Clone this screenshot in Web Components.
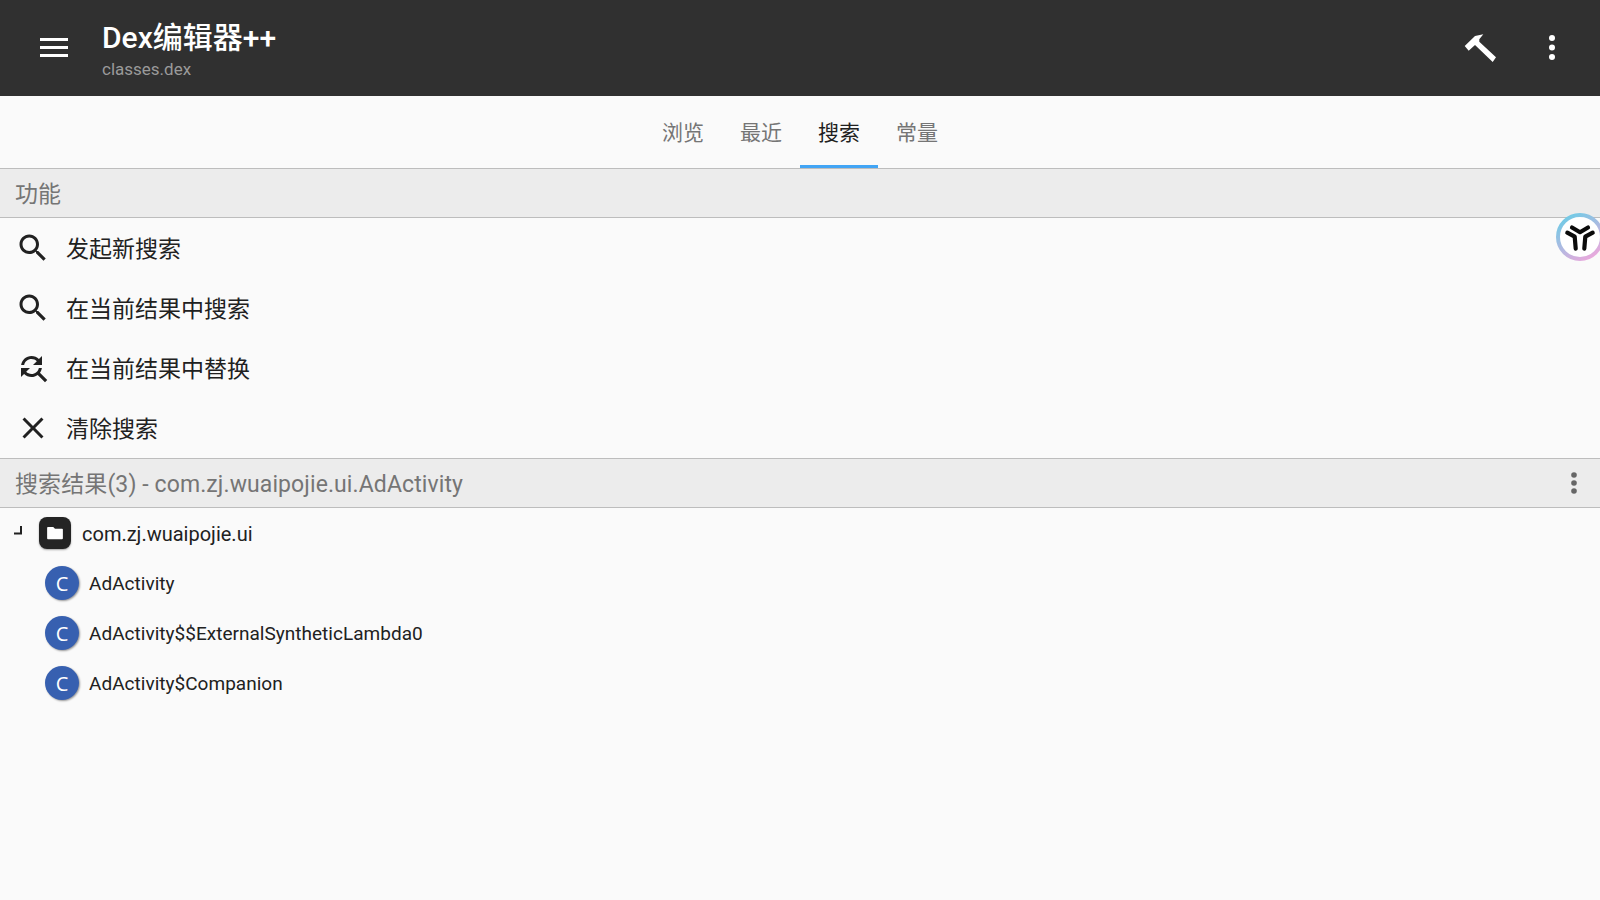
<!DOCTYPE html>
<html>
<head>
<meta charset="utf-8">
<title>Dex编辑器++</title>
<style>
  html, body { margin: 0; padding: 0; height: 100%; overflow: hidden; background: #fafafa; }
  body { font-family: Roboto, "Noto Sans CJK SC", sans-serif; }
</style>
</head>
<body>
<dex-app></dex-app>

<script>
const PATHS = {
  search: 'M15.5 14h-.79l-.28-.27C15.41 12.59 16 11.11 16 9.5 16 5.91 13.09 3 9.5 3S3 5.91 3 9.5 5.91 16 9.5 16c1.61 0 3.09-.59 4.23-1.57l.27.28v.79l5 4.99L20.49 19l-4.99-5zm-6 0C7.01 14 5 11.99 5 9.5S7.01 5 9.5 5 14 7.01 14 9.5 11.99 14 9.5 14z',
  replace: 'M11 6c1.38 0 2.63.56 3.54 1.46L12 10h6V4l-2.05 2.05C14.68 4.78 12.93 4 11 4c-3.53 0-6.43 2.61-6.92 6H6.1c.46-2.28 2.48-4 4.9-4zm5.64 9.14c.66-.9 1.12-1.97 1.28-3.14H15.9c-.46 2.28-2.48 4-4.9 4-1.38 0-2.63-.56-3.54-1.46L10 12H4v6l2.05-2.05C7.32 17.22 9.07 18 11 18c1.55 0 2.98-.51 4.14-1.36L20 21.49 21.49 20l-4.85-4.86z',
  close: 'M19 6.41L17.59 5 12 10.59 6.41 5 5 6.41 10.59 12 5 17.59 6.41 19 12 13.41 17.59 19 19 17.59 13.41 12z'
};

class AppBar extends HTMLElement {
  constructor() {
    super();
    const shadow = this.attachShadow({ mode: 'open' });
    shadow.innerHTML = `
      <style>
        :host { display: flex; align-items: center; height: 96px; background: #303030; color: #fff; flex: none; }
        .nav { width: 102px; height: 96px; flex: none; }
        .titles { flex: 1; display: flex; flex-direction: column; }
        .title { font-size: 30px; line-height: 38px; font-weight: 500; margin-top: 2px; }
        .sub { font-size: 17px; line-height: 20px; color: #9a9a9a; margin-top: 2px; }
        .act { display: block; flex: none; margin-top: -2px; }
      </style>
      <svg class="nav" viewBox="0 0 102 96">
        <rect x="40" y="38" width="28" height="3" fill="#fff"/>
        <rect x="40" y="46" width="28" height="3" fill="#fff"/>
        <rect x="40" y="54" width="28" height="3" fill="#fff"/>
      </svg>
      <div class="titles">
        <div class="title">Dex编辑器++</div>
        <div class="sub">classes.dex</div>
      </div>
      <svg class="act" width="40" height="40" viewBox="0 0 40 40">
        <polygon fill="#fff" points="4.7,19 15,9 23.3,7.3 19.3,12.3 19.3,14.7 36,30.3 32.7,35 15,18 8.7,23.7"/>
      </svg>
      <svg class="act" width="48" height="40" viewBox="0 0 48 40" style="margin-left:28px;margin-right:24px">
        <circle cx="24" cy="11" r="3" fill="#fff"/>
        <circle cx="24" cy="20.5" r="3" fill="#fff"/>
        <circle cx="24" cy="30" r="3" fill="#fff"/>
      </svg>`;
  }
}

class TabBar extends HTMLElement {
  constructor() {
    super();
    const shadow = this.attachShadow({ mode: 'open' });
    shadow.innerHTML = `
      <style>
        :host { display: flex; justify-content: center; height: 72px; border-bottom: 1px solid #bdbdbd; box-sizing: content-box; flex: none; }
        ::slotted(tab-item) { width: 78px; }
      </style>
      <slot></slot>`;
  }
}

class TabItem extends HTMLElement {
  constructor() {
    super();
    const shadow = this.attachShadow({ mode: 'open' });
    shadow.innerHTML = `
      <style>
        :host { display: flex; align-items: center; justify-content: center; box-sizing: border-box; height: 72px; font-size: 21px; color: #757575; border-bottom: 3px solid transparent; }
        :host([active]) { color: #212121; border-bottom-color: #42a5f5; }
      </style>
      <slot></slot>`;
  }
}

class SectionHeader extends HTMLElement {
  constructor() {
    super();
    const shadow = this.attachShadow({ mode: 'open' });
    shadow.innerHTML = `
      <style>
        :host { display: flex; align-items: center; height: 48px; padding: 0 0 0 15px; background: #ececec; color: #757575; font-size: 23px; border-bottom: 1px solid #bdbdbd; flex: none; }
        .label { flex: 1; margin-top: -2px; letter-spacing: .1px; }
        svg { display: none; margin-right: 14px; }
        :host([menu]) svg { display: block; }
      </style>
      <div class="label"><slot></slot></div>
      <svg width="24" height="28" viewBox="0 0 24 28">
        <circle cx="12" cy="6" r="2.8" fill="#666"/>
        <circle cx="12" cy="14" r="2.8" fill="#666"/>
        <circle cx="12" cy="22" r="2.8" fill="#666"/>
      </svg>`;
  }
}

class ActionRow extends HTMLElement {
  constructor() {
    super();
    const shadow = this.attachShadow({ mode: 'open' });
    shadow.innerHTML = `
      <style>
        :host { display: flex; align-items: center; height: 60px; color: #212121; font-size: 23px; flex: none; }
        svg { width: 36px; height: 36px; margin: 0 15px 0 15px; fill: #212121; flex: none; }
        .text { margin-top: -2px; }
      </style>
      <svg viewBox="0 0 24 24"><path d=""></path></svg>
      <div class="text"><slot></slot></div>`;
  }
  connectedCallback() {
    this.shadowRoot.querySelector('path').setAttribute('d', PATHS[this.getAttribute('icon')]);
  }
}

class PackageRow extends HTMLElement {
  constructor() {
    super();
    const shadow = this.attachShadow({ mode: 'open' });
    shadow.innerHTML = `
      <style>
        :host { display: flex; align-items: center; height: 50px; color: #212121; font-size: 20px; flex: none; }
        .arrow { width: 39px; height: 50px; flex: none; }
        .box { width: 32px; height: 32px; border-radius: 8px; background: #242424; box-shadow: 0 1px 2px rgba(0,0,0,.35); display: flex; align-items: center; justify-content: center; margin-right: 11px; flex: none; }
        .text { margin-top: 2px; }
      </style>
      <svg class="arrow" viewBox="0 0 39 50">
        <path d="M14 25.5h7V18" fill="none" stroke="#212121" stroke-width="2"/>
      </svg>
      <div class="box">
        <svg width="16" height="14" viewBox="0 0 18 16"><path fill="#fff" d="M1 1h6l2 2h8a1 1 0 0 1 1 1v10a1 1 0 0 1-1 1H1a1 1 0 0 1-1-1V2a1 1 0 0 1 1-1z"/></svg>
      </div>
      <div class="text"><slot></slot></div>`;
  }
}

class ClassRow extends HTMLElement {
  constructor() {
    super();
    const shadow = this.attachShadow({ mode: 'open' });
    shadow.innerHTML = `
      <style>
        :host { display: flex; align-items: center; height: 50px; padding-left: 45px; color: #212121; font-size: 19px; letter-spacing: .02px; flex: none; }
        .c { width: 34px; height: 34px; border-radius: 50%; background: #3760b0; color: #fff; font: 20px "Open Sans", sans-serif; display: flex; align-items: center; justify-content: center; margin-right: 10px; box-shadow: 1px 1px 2px rgba(0,0,0,.4); flex: none; }
        .text { margin-top: 1px; }
      </style>
      <div class="c">C</div>
      <div class="text"><slot></slot></div>`;
  }
}

class FloatBall extends HTMLElement {
  constructor() {
    super();
    const shadow = this.attachShadow({ mode: 'open' });
    shadow.innerHTML = `
      <style>
        :host { display: block; position: absolute; left: 1556px; top: 213px; width: 48px; height: 48px; }
        svg { display: block; }
      </style>
      <svg width="48" height="48" viewBox="0 0 48 48">
        <defs>
          <linearGradient id="ring" x1="0.2" y1="0" x2="0.8" y2="1">
            <stop offset="0" stop-color="#6fcbe6"/>
            <stop offset="1" stop-color="#eda8dc"/>
          </linearGradient>
        </defs>
        <circle cx="24" cy="24" r="22" fill="#fff" stroke="url(#ring)" stroke-width="4"/>
        <g fill="none" stroke="#0a0a0a" stroke-width="4.2" stroke-linecap="round" stroke-linejoin="round">
          <path d="M16 14.5 L24 19.2 L32 14.5"/>
          <path d="M11.3 19.7 L18.7 23.7 L19.7 35.7"/>
          <path d="M36.7 19.7 L29.3 23.7 L28.3 35.7"/>
        </g>
      </svg>`;
  }
}

class DexApp extends HTMLElement {
  constructor() {
    super();
    const shadow = this.attachShadow({ mode: 'open' });
    shadow.innerHTML = `
      <style>
        :host { display: flex; flex-direction: column; height: 900px; background: #fafafa; position: relative; overflow: hidden; }
        .list { display: flex; flex-direction: column; }
      </style>
      <app-bar></app-bar>
      <tab-bar>
        <tab-item>浏览</tab-item>
        <tab-item>最近</tab-item>
        <tab-item active>搜索</tab-item>
        <tab-item>常量</tab-item>
      </tab-bar>
      <section-header>功能</section-header>
      <div class="list">
        <action-row icon="search">发起新搜索</action-row>
        <action-row icon="search">在当前结果中搜索</action-row>
        <action-row icon="replace">在当前结果中替换</action-row>
        <action-row icon="close">清除搜索</action-row>
      </div>
      <section-header menu style="border-top:1px solid #bdbdbd">搜索结果(3) - com.zj.wuaipojie.ui.AdActivity</section-header>
      <div class="list">
        <package-row>com.zj.wuaipojie.ui</package-row>
        <class-row>AdActivity</class-row>
        <class-row>AdActivity$$ExternalSyntheticLambda0</class-row>
        <class-row>AdActivity$Companion</class-row>
      </div>
      <float-ball></float-ball>`;
  }
}

customElements.define('app-bar', AppBar);
customElements.define('tab-bar', TabBar);
customElements.define('tab-item', TabItem);
customElements.define('section-header', SectionHeader);
customElements.define('action-row', ActionRow);
customElements.define('package-row', PackageRow);
customElements.define('class-row', ClassRow);
customElements.define('float-ball', FloatBall);
customElements.define('dex-app', DexApp);
</script>
</body>
</html>
